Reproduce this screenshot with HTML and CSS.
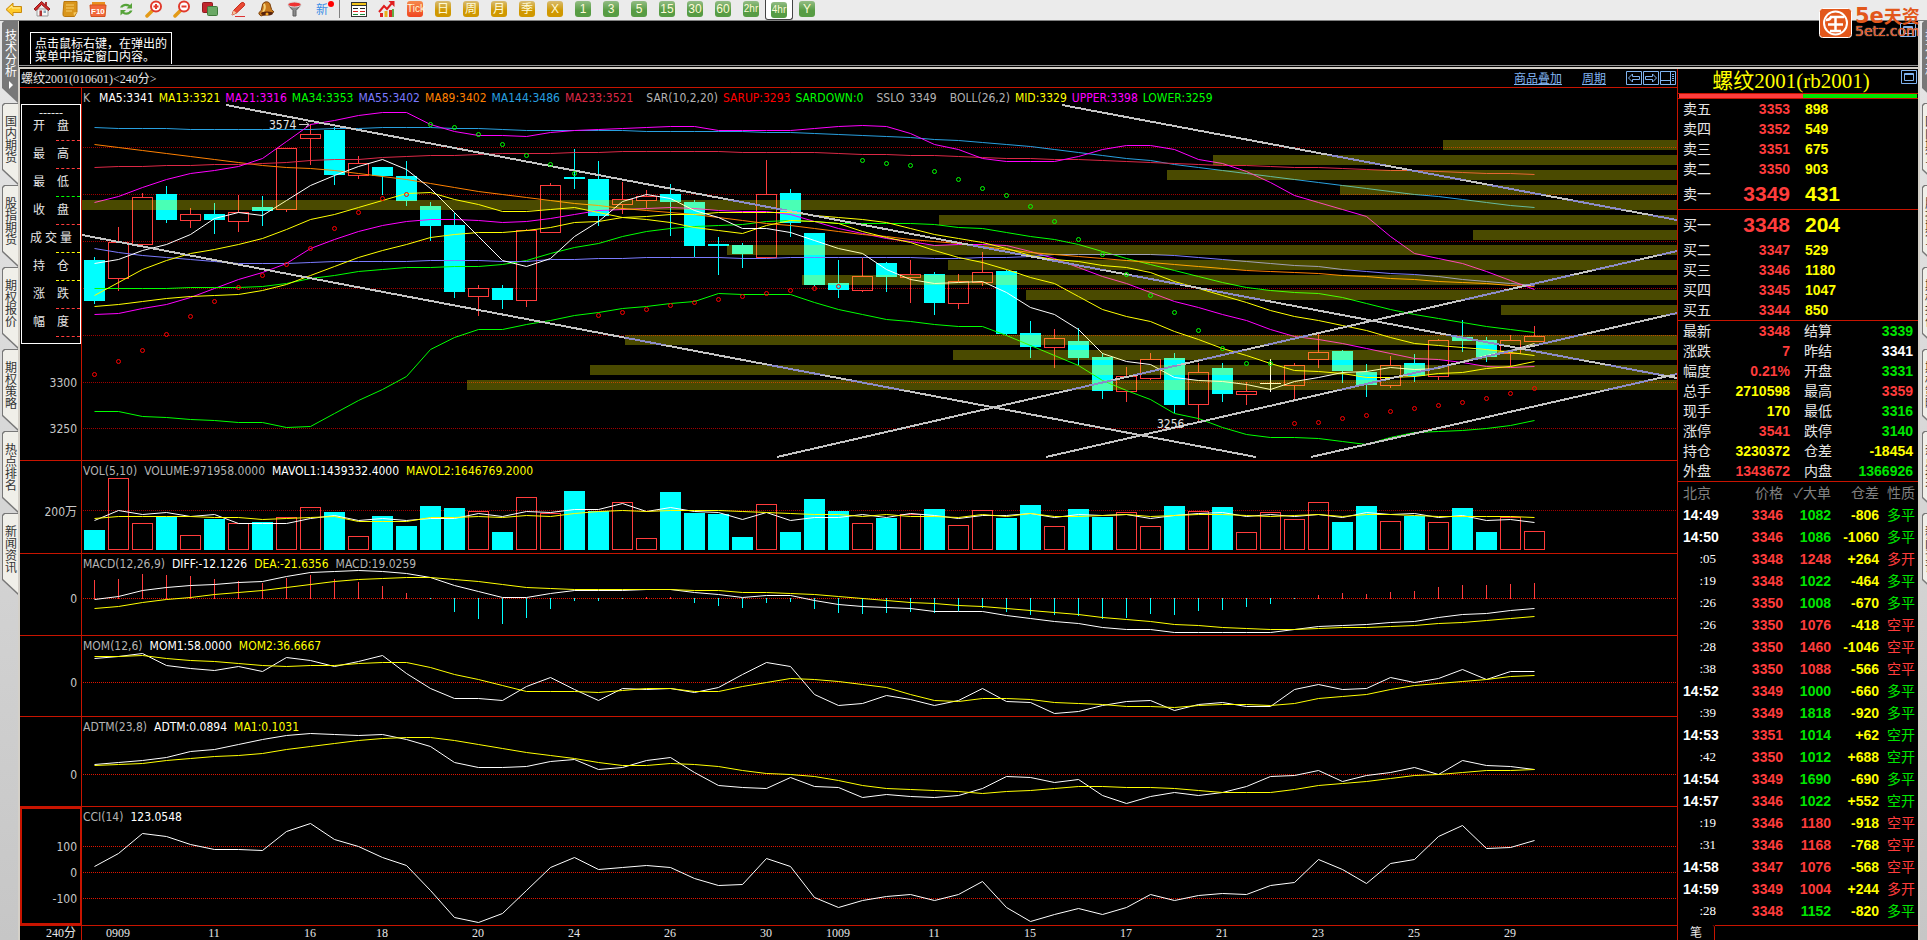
FILE: index.html
```html
<!DOCTYPE html>
<html lang="zh-CN">
<head>
    <meta charset="UTF-8" />
    <meta name="viewport" content="width=device-width, initial-scale=1" />
    <title>螺纹2001 240分</title>
    <link rel="stylesheet" href="styles.css">
</head>
<body>

    <!-- Toolbar -->
    <header class="toolbar">
        <button aria-label="返回"><svg width="18" height="18" viewBox="0 0 18 18"><path d="M1 9.500 L8 3 V6.500 H16.500 V12.500 H8 V16 Z" fill="#ffc928" stroke="#c98a10"/><path d="M3.500 9 L7 6 V8 H15" fill="none" stroke="#fff0a0"/></svg></button>
        <button aria-label="首页"><svg width="18" height="18" viewBox="0 0 18 18"><path d="M4 9 H15 V16 H4 Z" fill="#f4f4f4" stroke="#999"/><path d="M12 2 H14 V6 H12 Z" fill="#a33"/><path d="M1 9 L8.500 1.500 L17 9 L15.500 10.500 L8.500 4.500 L3 10.500 Z" fill="#d22a2a" stroke="#8d1818"/><path d="M6.500 10.500 H9 V16 H6.500 Z" fill="#b03030"/><path d="M10.500 10.500 H13 V13 H10.500 Z" fill="#8ab"/></svg></button>
        <button aria-label="公告"><svg width="18" height="18" viewBox="0 0 18 18"><path d="M3 1.500 H16 V12 L13.500 16.500 H3.500 Q1.500 16.500 2 13 Z" fill="#d9961c" stroke="#b9770c"/><path d="M5 5 H13 M5 8 H13 M5 11 H11" stroke="#f6cd6b"/><path d="M13 16 L12.500 12.500 L16 12" fill="#f5c965"/></svg></button>
        <button aria-label="F10"><svg width="18" height="18" viewBox="0 0 18 18"><path d="M3 2 H16 V14 H3 Z" fill="#e98f1f"/><path d="M1 5 H17 L16 16.500 H2 Z" fill="#f2683a" stroke="#d2501f"/><text x="2" y="14" class="f10">F10</text></svg></button>
        <button aria-label="刷新"><svg width="18" height="18" viewBox="0 0 18 18"><path d="M3 7.500 Q5 3 11 4 L13 5 L15 3 V8.500 H9.500 L11.500 6.500 Q7 5 5.500 7.500 Z" fill="#56a339"/><path d="M15.500 10.500 Q13.500 15.500 7.500 14.500 L5.500 13.500 L3.500 15.500 V10 H9 L7 12 Q11.500 13.500 13 10.500 Z" fill="#56a339"/></svg></button>
        <button aria-label="放大"><svg width="18" height="18" viewBox="0 0 18 18"><path d="M2 16 L8 10" stroke="#e39a17" stroke-width="3.500" stroke-linecap="round"/><circle cx="11" cy="6.500" r="5" fill="#fff" stroke="#e13a2c" stroke-width="2"/><path d="M8.500 6.500 H13.500 M11 4 V9" stroke="#e13a2c" stroke-width="2"/></svg></button>
        <button aria-label="缩小"><svg width="18" height="18" viewBox="0 0 18 18"><path d="M2 16 L8 10" stroke="#e39a17" stroke-width="3.500" stroke-linecap="round"/><circle cx="11" cy="6.500" r="5" fill="#fff" stroke="#e13a2c" stroke-width="2"/><path d="M8.500 6.500 H13.500" stroke="#e13a2c" stroke-width="2"/></svg></button>
        <button aria-label="叠加"><svg width="18" height="18" viewBox="0 0 18 18"><rect x="1.500" y="2.500" width="10" height="10" rx="1" fill="#c0262d" stroke="#8f1b20"/><rect x="6.500" y="6.500" width="10" height="9" rx="1" fill="#6aa865" stroke="#3f7a3b"/></svg></button>
        <button aria-label="画线"><svg width="18" height="18" viewBox="0 0 18 18"><path d="M3 15 L4.500 10.500 L12 3 Q14 1.500 15.500 3.500 Q16 5 15 6 L7.500 13 Z" fill="#ea4a35" stroke="#c42d1c"/><path d="M3 15 L4.500 10.500 L7.500 13 Z" fill="#f4c9a0"/><path d="M6 16.500 H16" stroke="#d33"/></svg></button>
        <button aria-label="预警"><svg width="18" height="18" viewBox="0 0 18 18"><path d="M8 2 Q13 1 13.500 6 Q14 10 17 12 L4 16 Q1 14 2 12.500 Q5 11 5 7 Q5 3 8 2 Z" fill="#c97a1c" stroke="#7c420e"/><path d="M7 4 Q9 8 6 12" fill="none" stroke="#f6cf74" stroke-width="2"/><ellipse cx="10" cy="13.500" rx="6" ry="2" fill="#57220d"/><circle cx="10" cy="14" r="1.500" fill="#f6a623"/></svg></button>
        <button aria-label="筛选"><svg width="18" height="18" viewBox="0 0 18 18"><path d="M3 5 L8 10.500 V16 H11 V10.500 L16 5 Z" fill="#8a8a8a" stroke="#5d5d5d"/><ellipse cx="9.500" cy="4.500" rx="6.500" ry="2.500" fill="#e33" stroke="#ddd"/></svg></button>
        <button aria-label="新功能" class="new-btn">新<i></i></button>
        <span class="sep"></span>
        <button aria-label="报价表"><svg width="18" height="18" viewBox="0 0 18 18"><rect x="1.500" y="2.500" width="15" height="14" fill="#fff" stroke="#333"/><path d="M2 4 H16" stroke="#f2c21a" stroke-width="2"/><path d="M1 5.500 H17" stroke="#333"/><path d="M3 8.500 H8 M10 8.500 H15" stroke="#222"/><path d="M3 11.500 H8 M10 11.500 H15" stroke="#d22"/><path d="M3 14.500 H8 M10 14.500 H15" stroke="#1a8a3a"/></svg></button>
        <button aria-label="走势图"><svg width="18" height="18" viewBox="0 0 18 18"><rect x="2" y="13" width="3" height="4" fill="#d22"/><rect x="6.500" y="11" width="3" height="6" fill="#e8b01c"/><rect x="11" y="10" width="3" height="7" fill="#d22"/><rect x="14" y="9" width="2" height="8" fill="#6a4"/><path d="M1 12 L6 6 L9 9 L14 3" fill="none" stroke="#e01e1e" stroke-width="2"/><path d="M10.500 1 H16.500 V7 Z" fill="#e01e1e"/></svg></button>
        <button><b class="badge tick">Tick</b></button>
        <button><b class="badge gold">日</b></button>
        <button><b class="badge gold">周</b></button>
        <button><b class="badge gold">月</b></button>
        <button><b class="badge gold">季</b></button>
        <button><b class="badge gold">X</b></button>
        <button><b class="badge green">1</b></button>
        <button><b class="badge green">3</b></button>
        <button><b class="badge green">5</b></button>
        <button><b class="badge green">15</b></button>
        <button><b class="badge green">30</b></button>
        <button><b class="badge green">60</b></button>
        <button><b class="badge green small">2hr</b></button>
        <button class="selected"><b class="badge green small">4hr</b></button>
        <button><b class="badge green">Y</b></button>
    </header>

    <div class="workspace">
        <nav class="rail">
            <button class="tab active"><span>技术分析<br><i></i></span></button>
            <button class="tab"><span>国内期货</span></button>
            <button class="tab"><span>股指期货</span></button>
            <button class="tab"><span>期权报价</span></button>
            <button class="tab"><span>期权策略</span></button>
            <button class="tab"><span>热点排名</span></button>
            <button class="tab"><span>新闻资讯</span></button>
        </nav>

        <div class="desk">
            <section class="blank-pane">
                <p class="hint">点击鼠标右键，在弹出的菜单中指定窗口内容。</p>
                <button class="win-btn" aria-label="最大化"><svg width="16" height="14"><path d="M0.500 0.500 H15.500 V13.500 H0.500 Z M3.500 3.500 H12.500 V10.500 H3.500 Z M3 4.500 H13" /></svg></button>
                <div class="logo">
                    <svg width="33" height="30" viewBox="0 0 33 30"><rect x="0.500" y="0.500" width="32" height="29" rx="3" fill="#e2571b" stroke="#fff"/><circle cx="16.500" cy="15" r="11.500" fill="none" stroke="#fff" stroke-width="2"/><path d="M7 12 Q11 12 12 9 H25 M9 16.500 H24 M16.500 10 V23 M11 23 H22" fill="none" stroke="#fff" stroke-width="2.500"/></svg>
                    <div class="logo-text"><span class="logo-top"><span class="five">5e</span>天资</span><span class="logo-url">5etz.com</span></div>
                </div>
            </section>

            <div class="windows">
                <main class="chart">
                    <div class="chart-title">
                        <h1>螺纹2001(010601)&lt;240分&gt;</h1>
                        <a href="#overlay">商品叠加</a>
                        <a href="#period">周期</a>
                        <div class="chart-tools">
                            <button class="win-btn" aria-label="左移"><svg width="16" height="14"><path d="M0.500 0.500 H15.500 V13.500 H0.500 Z M2.500 7 L6.500 3 V5.500 H13.500 V8.500 H6.500 V11 Z"/></svg></button>
                            <button class="win-btn" aria-label="右移"><svg width="16" height="14"><path d="M0.500 0.500 H15.500 V13.500 H0.500 Z M13.500 7 L9.500 3 V5.500 H2.500 V8.500 H9.500 V11 Z"/></svg></button>
                            <button class="win-btn" aria-label="侧栏"><svg width="16" height="14"><path d="M0.500 0.500 H15.500 V13.500 H0.500 Z M10.500 0 V14 M0 9.500 H10 M12 3.500 H14 M12 5.500 H14 M12 7.500 H14 M12 9.500 H14"/></svg></button>
                        </div>
                    </div>

                    <section class="panel">
                        <div class="axis">
                            <svg class="axis-labels" id="priceAxis"></svg>
                            <ul class="readout">
                                <li class="first">------</li>
                                <li class="red">开　盘</li>
                                <li class="red">最　高</li>
                                <li class="green">最　低</li>
                                <li class="red">收　盘</li>
                                <li class="yellow">成 交 量</li>
                                <li class="yellow">持　仓</li>
                                <li class="red">涨　跌</li>
                                <li class="red">幅　度</li>
                            </ul>
                        </div>
                        <div class="plot">
                            <div class="legend main-legend">
                                <span class="name k">K</span><span class="white">MA5:3341</span><span class="yellow">MA13:3321</span><span class="magenta">MA21:3316</span><span class="green">MA34:3353</span><span class="violet">MA55:3402</span><span class="orange">MA89:3402</span><span class="blue">MA144:3486</span><span class="crimson">MA233:3521</span>
                                <span class="name group">SAR(10,2,20)</span><span class="pure-red">SARUP:3293</span><span class="green">SARDOWN:0</span>
                                <span class="name group">SSLO</span><span class="name">3349</span>
                                <span class="name group">BOLL(26,2)</span><span class="yellow">MID:3329</span><span class="magenta">UPPER:3398</span><span class="green">LOWER:3259</span>
                            </div>
                            <svg id="price" height="356"></svg>
                        </div>
                    </section>

                    <section class="panel">
                        <div class="axis"><svg class="axis-labels" id="volAxis"></svg></div>
                        <div class="plot">
                            <div class="legend"><span class="name">VOL(5,10)</span><span class="name">VOLUME:971958.0000</span><span class="white">MAVOL1:1439332.4000</span><span class="yellow">MAVOL2:1646769.2000</span></div>
                            <svg id="vol" height="76"></svg>
                        </div>
                    </section>

                    <section class="panel">
                        <div class="axis"><svg class="axis-labels" id="macdAxis"></svg></div>
                        <div class="plot">
                            <div class="legend"><span class="name">MACD(12,26,9)</span><span class="white">DIFF:-12.1226</span><span class="yellow">DEA:-21.6356</span><span class="name">MACD:19.0259</span></div>
                            <svg id="macd" height="65"></svg>
                        </div>
                    </section>

                    <section class="panel">
                        <div class="axis"><svg class="axis-labels" id="momAxis"></svg></div>
                        <div class="plot">
                            <div class="legend"><span class="name">MOM(12,6)</span><span class="white">MOM1:58.0000</span><span class="yellow">MOM2:36.6667</span></div>
                            <svg id="mom" height="64"></svg>
                        </div>
                    </section>

                    <section class="panel">
                        <div class="axis"><svg class="axis-labels" id="adtmAxis"></svg></div>
                        <div class="plot">
                            <div class="legend"><span class="name">ADTM(23,8)</span><span class="white">ADTM:0.0894</span><span class="yellow">MA1:0.1031</span></div>
                            <svg id="adtm" height="73"></svg>
                        </div>
                    </section>

                    <section class="panel current">
                        <div class="axis"><svg class="axis-labels" id="cciAxis"></svg></div>
                        <div class="plot">
                            <div class="legend"><span class="name">CCI(14)</span><span class="white">123.0548</span></div>
                            <svg id="cci" height="102"></svg>
                        </div>
                    </section>

                    <section class="panel dates">
                        <div class="axis">240分</div>
                        <div class="plot"><svg id="dates" height="14"></svg></div>
                    </section>
                </main>

                <aside class="quote">
                    <div class="quote-title">
                        <h2>螺纹2001(rb2001)</h2>
                        <button class="win-btn" aria-label="最大化"><svg width="16" height="14"><path d="M0.500 0.500 H15.500 V13.500 H0.500 Z M3.500 3.500 H12.500 V10.500 H3.500 Z M3 4.500 H13"/></svg></button>
                    </div>
                    <div class="ratio"><span class="buy"></span><span class="sell"></span></div>

                    <table class="book">
                        <tbody>
                            <tr><th>卖五</th><td>3353</td><td>898</td></tr>
                            <tr><th>卖四</th><td>3352</td><td>549</td></tr>
                            <tr><th>卖三</th><td>3351</td><td>675</td></tr>
                            <tr><th>卖二</th><td>3350</td><td>903</td></tr>
                            <tr class="best"><th>卖一</th><td>3349</td><td>431</td></tr>
                        </tbody>
                    </table>
                    <table class="book">
                        <tbody>
                            <tr class="best"><th>买一</th><td>3348</td><td>204</td></tr>
                            <tr><th>买二</th><td>3347</td><td>529</td></tr>
                            <tr><th>买三</th><td>3346</td><td>1180</td></tr>
                            <tr><th>买四</th><td>3345</td><td>1047</td></tr>
                            <tr><th>买五</th><td>3344</td><td>850</td></tr>
                        </tbody>
                    </table>
                    <table class="stats">
                        <tbody>
                            <tr><th>最新</th><td class="red">3348</td><th>结算</th><td class="green">3339</td></tr>
                            <tr><th>涨跌</th><td class="red">7</td><th>昨结</th><td class="white">3341</td></tr>
                            <tr><th>幅度</th><td class="red">0.21%</td><th>开盘</th><td class="green">3331</td></tr>
                            <tr><th>总手</th><td class="yellow">2710598</td><th>最高</th><td class="red">3359</td></tr>
                            <tr><th>现手</th><td class="yellow">170</td><th>最低</th><td class="green">3316</td></tr>
                            <tr><th>涨停</th><td class="red">3541</td><th>跌停</th><td class="green">3140</td></tr>
                            <tr><th>持仓</th><td class="yellow">3230372</td><th>仓差</th><td class="yellow">-18454</td></tr>
                            <tr><th>外盘</th><td class="red">1343672</td><th>内盘</th><td class="green">1366926</td></tr>
                        </tbody>
                    </table>
                    <table class="ticks">
                        <thead><tr><th>北京</th><th>价格</th><th>✓大单</th><th>仓差</th><th>性质</th></tr></thead>
                        <tbody id="ticks"></tbody>
                    </table>
                    <div class="quote-tabs"><button>笔</button><span></span></div>
                </aside>
            </div>
        </div>

        <nav class="rail rail-right">
            <button class="tab active"><span>技术分析</span></button>
            <button class="tab"><span>国内期货</span></button>
            <button class="tab"><span>股指期货</span></button>
            <button class="tab"><span>期权报价</span></button>
            <button class="tab"><span>期权策略</span></button>
            <button class="tab"><span>热点排名</span></button>
            <button class="tab"><span>新闻资讯</span></button>
        </nav>
    </div>

    <script src="script.js"></script>
</body>
</html>
```
FILE: styles.css
```css
* {
    box-sizing: border-box;
}

body {
    margin: 0;
    height: 100vh;
    display: flex;
    flex-direction: column;
    overflow: hidden;
    background: #000;
    color: #e6e6e6;
    font-family: "Liberation Serif", "Noto Sans CJK SC", serif;
    font-size: 12px;
}

button {
    margin: 0;
    padding: 0;
    border: none;
    background: none;
    color: inherit;
    font: inherit;
    cursor: pointer;
}

h1, h2, p, ul {
    margin: 0;
    padding: 0;
    font-weight: normal;
}

svg {
    display: block;
}

.white { color: #fff; }
.yellow { color: #ffff00; }
.magenta { color: #ff00ff; }
.green { color: #00ff00; }
.violet { color: #7b7bff; }
.orange { color: #ff8000; }
.blue { color: #28a0e0; }
.crimson { color: #dc2846; }
.red { color: #ff3c3c; }
.pure-red { color: #ff0000; }

/* toolbar */
.toolbar {
    display: flex;
    height: 21px;
    flex-shrink: 0;
    background: #ebebeb;
    border-bottom: 1px solid #808080;
}

.toolbar button {
    position: relative;
    width: 28px;
    height: 20px;
    padding-bottom: 2px;
    display: flex;
    align-items: center;
    justify-content: center;
}

.toolbar .sep {
    width: 1px;
    height: 18px;
    margin: 0 5px 0 3px;
    background: #808080;
}

.toolbar .selected {
    padding: 0;
    background: #fff;
    border: 1px solid #444;
    border-top: none;
    border-radius: 0 0 3px 3px;
}

.f10 {
    font: bold 8px "Liberation Sans Narrow", "Liberation Sans", sans-serif;
    fill: #fff;
}

.new-btn {
    color: #3a8ee6;
}

.new-btn i {
    position: absolute;
    top: 1px;
    right: 2px;
    width: 6px;
    height: 6px;
    border-radius: 50%;
    background: #f00;
}

.badge {
    width: 16px;
    height: 16px;
    border-radius: 3px;
    color: #fffbd8;
    font: 12px/16px "Liberation Sans", "Noto Sans CJK SC", sans-serif;
    text-align: center;
}

.badge.tick { background: linear-gradient(#f58a4c, #f0451f); }
.badge.gold { background: linear-gradient(#d8bc72, #d09800 60%); }
.badge.green { background: linear-gradient(#93bd84, #579c44 60%); }

.badge.tick, .badge.small {
    font: 10px/16px "Liberation Sans Narrow", "Liberation Sans", sans-serif;
}

/* side rails */
.workspace {
    display: flex;
    flex: 1;
    min-height: 0;
}

.rail {
    width: 18px;
    flex-shrink: 0;
    overflow: hidden;
    padding-left: 2px;
    background: linear-gradient(#e6e6e6, #c6c6c6);
}

.rail-right {
    width: 7px;
}

.tab {
    display: block;
    position: relative;
    width: 16px;
    height: 82px;
    padding: 13px 0 0 3px;
    background: #777;
    color: #333;
    text-align: left;
    vertical-align: top;
    clip-path: polygon(0 2px, 2px 0, 100% 0, 100% 100%, 0 67px);
}

.tab::before {
    content: "";
    position: absolute;
    inset: 1px 0 0 1px;
    background: #f0efe9;
    clip-path: polygon(0 2px, 2px 0, 100% 0, 100% 79px, 0 65px);
}

.tab.active {
    color: #fff;
    padding-top: 9px;
}

.tab.active::before {
    background: #787878;
}

.tab span {
    position: relative;
    display: block;
    width: 12px;
    height: 69px;
    line-height: 12px;
}

.tab.active span {
    height: 73px;
}

.tab i {
    display: block;
    width: 5px;
    margin: 3px 0 0 4px;
    border: 4px solid transparent;
    border-left-color: #fff;
    border-right: none;
}

/* window area */
.desk {
    flex: 1;
    min-width: 0;
    display: flex;
    flex-direction: column;
    border-left: 1px solid #d4d0c8;
    border-right: 2px solid #d4d0c8;
}

.blank-pane {
    position: relative;
    height: 45px;
    border-bottom: 1px solid #909090;
    padding: 11px 0 0 11px;
    flex-shrink: 0;
}

.hint {
    width: 142px;
    height: 32px;
    padding: 5px 4px 0;
    border: 1px solid #fff;
    border-bottom: none;
    color: #fff;
    line-height: 13px;
}

.win-btn svg {
    fill: none;
    stroke: #80b4f0;
}

.blank-pane .win-btn {
    position: absolute;
    top: 2px;
    right: 2px;
}

.logo {
    position: absolute;
    top: -13px;
    right: -3px;
    display: flex;
    gap: 3px;
    color: #e2571b;
    font-family: "DejaVu Sans", "Noto Sans CJK SC", sans-serif;
}

.logo-text {
    width: 66px;
    display: flex;
    flex-direction: column;
    white-space: nowrap;
}

.logo-top {
    height: 17px;
    font-size: 18px;
    font-weight: bold;
    line-height: 16px;
}

.five {
    font-size: 21px;
}

.logo-url {
    font-size: 14px;
    line-height: 13px;
    text-shadow: 0 0 1px #fff;
}

.windows {
    flex: 1;
    min-height: 0;
    display: flex;
    margin-top: 1px;
    border-top: 2px solid #d4d0c8;
    border-left: 1px solid #d4d0c8;
}

/* chart window */
.chart {
    flex: 1;
    min-width: 0;
}

.chart-title {
    display: flex;
    align-items: center;
    gap: 20px;
    height: 18px;
    padding: 0 1px;
}

.chart-title h1 {
    flex: 1;
    font-size: 12px;
}

.chart-title a {
    color: #80b4f0;
}

.chart-tools {
    display: flex;
    gap: 1px;
}

.panel {
    display: flex;
    border-top: 1px solid #c81400;
}

.axis {
    position: relative;
    width: 62px;
    flex-shrink: 0;
    border-right: 1px solid #c81400;
}

.axis-labels {
    position: absolute;
    left: 0;
    top: 16px;
    width: 61px;
    height: 100%;
    overflow: visible;
    font: 12px "DejaVu Sans Condensed", "Noto Sans", "Noto Sans CJK SC", sans-serif;
    fill: #c8c8c8;
}

.current .axis {
    outline: 2px solid #c81400;
    outline-offset: -2px;
}

.plot {
    flex: 1;
    min-width: 0;
}

.plot svg {
    width: 100%;
    overflow: hidden;
    font: 12px "DejaVu Sans Condensed", "Noto Sans", sans-serif;
    fill: #e6e6e6;
}

.legend {
    display: flex;
    gap: 7px;
    height: 16px;
    padding-left: 1px;
    font: 12px/20px "DejaVu Sans Condensed", "Noto Sans", sans-serif;
    white-space: nowrap;
}

.main-legend { gap: 5px; }
.legend .name { color: #b4b4b4; }
.legend .k { margin-right: 4px; }
.legend .group { margin-left: 8px; }

.readout {
    position: relative;
    width: 60px;
    height: 240px;
    margin: 16px 0 0 1px;
    border: 1px solid #fff;
    list-style: none;
    text-align: center;
}

.readout li {
    height: 28px;
    line-height: 27px;
}

.readout li::after {
    content: "";
    display: block;
    width: 24px;
    margin-left: auto;
    border-top: 1px dashed currentColor;
}

.readout li::first-line {
    color: #e6e6e6;
}

.readout .first {
    height: 8px;
    line-height: 16px;
}

.readout .first::after {
    display: none;
}

.dates {
    line-height: 14px;
}

.dates .axis {
    padding-right: 5px;
    text-align: right;
}

.plot #dates {
    font: 12px "Liberation Serif", serif;
}

/* quote window */
.quote {
    width: 241px;
    flex-shrink: 0;
    display: flex;
    flex-direction: column;
    border-left: 1px solid #c81400;
}

.quote-title {
    position: relative;
    height: 25px;
    flex-shrink: 0;
    border-bottom: 1px solid #c81400;
    text-align: center;
}

.quote-title h2 {
    padding-right: 14px;
    color: #ffff00;
    font-size: 21px;
    line-height: 24px;
}

.quote-title .win-btn {
    position: absolute;
    top: 1px;
    right: 1px;
}

.ratio {
    display: flex;
    height: 5px;
    flex-shrink: 0;
    padding: 0 1px;
    border-bottom: 1px solid #c81400;
}

.ratio .buy { flex: 52; background: #ff3c3c; }
.ratio .sell { flex: 48; background: #00e600; }

.quote table {
    width: 100%;
    table-layout: fixed;
    border-collapse: separate;
    border-spacing: 0;
    font: bold 14px "Liberation Sans", "Noto Sans CJK SC", sans-serif;
}

.quote th, .quote td {
    padding: 0;
    height: 20px;
    line-height: 20px;
    text-align: right;
}

.quote th {
    font-weight: normal;
}

.quote tbody th {
    padding-left: 5px;
    text-align: left;
}

.book, .stats {
    border-bottom: 1px solid #c81400;
}

.book th, .stats th { width: 45px; }

.book td:nth-child(2) {
    width: 67px;
    color: #ff3c3c;
}

.book td:last-child {
    padding-left: 15px;
    color: #ffff00;
    text-align: left;
}

.quote .best td {
    height: 30px;
    font-size: 21px;
}

.stats td:nth-child(2) { width: 67px; }
.stats th:nth-child(3) { width: 58px; padding-left: 14px; }
.stats td:last-child { padding-right: 5px; }

.quote .ticks th, .quote .ticks td {
    height: 22px;
    line-height: 22px;
}

.ticks th:nth-child(1) { width: 47px; padding-left: 5px; text-align: left; }
.ticks th:nth-child(2) { width: 58px; }
.ticks th:nth-child(3) { width: 48px; }
.ticks th:nth-child(4) { width: 48px; }
.ticks thead th { color: #808080; white-space: nowrap; }
.ticks th:last-child, .ticks td:last-child { padding-right: 3px; }

.ticks td:first-child {
    padding-left: 5px;
    text-align: left;
    color: #fff;
}

.quote .ticks .second {
    padding-right: 9px;
    text-align: right;
    font: 13px/22px "Liberation Serif", serif;
}

.ticks td:last-child { font-weight: normal; }
.ticks .green, .stats .green { color: #00e600; }

.quote-tabs {
    display: flex;
    flex: 1;
    margin-top: 3px;
}

.quote-tabs button {
    width: 37px;
    line-height: 14px;
    border-right: 1px solid #c81400;
    border-radius: 0 3px 0 0;
}

.quote-tabs span {
    flex: 1;
    border-top: 1px solid #c81400;
}
```
FILE: script.js
```js
const NS = 'http://www.w3.org/2000/svg';
const STEP = 24;   // px between bars
const FIRST = 12;  // centre of the first bar

const CYAN = '#00ffff';
const RED = '#ff3c3c';

function el(parent, name, attrs, text) {
  const node = document.createElementNS(NS, name);
  for (const key in attrs) node.setAttribute(key, attrs[key]);
  if (text !== undefined) node.textContent = text;
  parent.appendChild(node);
  return node;
}

const barX = i => FIRST + STEP * i;

// levels are stored in thirds of a pixel, offset is the top of the panel
function makePanel(id, offset) {
  const svg = document.getElementById(id);
  const y = v => v / 3 - offset;
  return {
    svg,
    y,
    line(values, color) {
      const points = values.map((v, i) => (barX(i) + 0.5) + ',' + (Math.floor(y(v)) + 0.5)).join(' ');
      el(svg, 'polyline', { points, fill: 'none', stroke: color });
    },
    grid(levels, color) {
      levels.forEach(v => {
        const gy = Math.floor(y(v)) + 0.5;
        el(svg, 'line', { x1: 1, x2: '100%', y1: gy, y2: gy, stroke: color, 'stroke-dasharray': '1 1', 'shape-rendering': 'crispEdges' });
      });
    },
    labels(items) {
      const axis = document.getElementById(id + 'Axis');
      items.forEach(([v, text]) => el(axis, 'text', { x: 57, y: Math.round(y(v)) + 5, 'text-anchor': 'end' }, text));
    },
    box(i, top, bottom, up) {
      const t = Math.round(y(top));
      const b = Math.round(y(bottom));
      if (up) {
        el(svg, 'rect', { x: barX(i) - 9.5, y: t + 0.5, width: 20, height: Math.max(b - t, 2), fill: 'none', stroke: RED, 'shape-rendering': 'crispEdges' });
      } else {
        el(svg, 'rect', { x: barX(i) - 10, y: t, width: 21, height: Math.max(b - t, 2), fill: CYAN });
      }
    },
    stick(i, from, to, color) {
      const a = Math.round(y(from));
      const b = Math.round(y(to));
      if (b > a) el(svg, 'rect', { x: barX(i), y: a, width: 1, height: b - a, fill: color });
    }
  };
}

/* ---------- price ---------- */
// [kind, body top, body bottom, high, low]
const candles = [
  ['d', 540, 663, 531, 672], ['u', 487, 593, 441, 632], ['u', 352, 491, 339, 496], ['d', 342, 420, 318, 429],
  ['u', 403, 419, 384, 444], ['d', 402, 420, 369, 462], ['u', 397, 422, 345, 456], ['d', 381, 393, 348, 438],
  ['u', 205, 388, 205, 396], ['u', 163, 173, 133, 255], ['d', 150, 285, 141, 315], ['u', 250, 284, 228, 297],
  ['d', 261, 288, 261, 345], ['d', 288, 363, 243, 378], ['d', 378, 438, 366, 483], ['d', 435, 636, 399, 654],
  ['u', 625, 647, 615, 708], ['d', 624, 660, 615, 687], ['u', 451, 659, 447, 681], ['u', 316, 455, 309, 455],
  ['d', 291, 297, 207, 327], ['d', 297, 408, 243, 438], ['u', 358, 371, 306, 402], ['u', 348, 359, 330, 384],
  ['d', 342, 366, 312, 468], ['d', 366, 498, 360, 531], ['d', 492, 498, 471, 585], ['d', 495, 522, 489, 564],
  ['u', 343, 530, 240, 530], ['d', 339, 430, 327, 471], ['d', 459, 615, 459, 618], ['d', 609, 630, 540, 654],
  ['u', 589, 629, 534, 636], ['d', 549, 591, 546, 636], ['u', 583, 590, 540, 669], ['d', 582, 669, 576, 705],
  ['u', 604, 668, 582, 687], ['u', 577, 605, 516, 618], ['d', 573, 762, 570, 765], ['d', 759, 801, 723, 834],
  ['u', 775, 800, 747, 864], ['d', 783, 834, 744, 855], ['d', 831, 933, 820, 957], ['u', 889, 932, 861, 966],
  ['u', 838, 893, 819, 900], ['d', 834, 975, 819, 1000], ['u', 877, 971, 849, 1026], ['d', 864, 942, 849, 966],
  ['u', 934, 941, 906, 975], ['w', 910, 913, 837, 936], ['u', 856, 914, 849, 960], ['u', 817, 836, 761, 864],
  ['d', 813, 873, 810, 909], ['d', 876, 915, 852, 951], ['u', 856, 914, 828, 924], ['d', 849, 888, 822, 906],
  ['u', 781, 887, 777, 900], ['d', 771, 783, 720, 816], ['d', 780, 832, 771, 846], ['u', 781, 818, 766, 858],
  ['u', 769, 782, 738, 782]
];

const ma = [
  ['#ff00ff', [703, 700, 686, 673, 652, 625, 598, 577, 550, 505, 478, 454, 436, 425, 419, 419, 421, 427, 425, 415, 403, 391, 387, 385, 383, 386, 391, 395, 395, 403, 425, 444, 460, 475, 484, 496, 493, 492, 497, 514, 535, 561, 588, 611, 636, 665, 683, 704, 722, 748, 769, 778, 790, 805, 820, 835, 838, 846, 858, 861, 859]],
  ['#00ff00', [625, 625, 625, 625, 622, 622, 622, 619, 609, 595, 586, 574, 568, 562, 562, 560, 558, 553, 540, 520, 502, 490, 469, 454, 445, 440, 436, 434, 425, 421, 425, 429, 430, 430, 430, 433, 442, 445, 457, 469, 478, 493, 513, 535, 552, 571, 589, 607, 622, 631, 636, 640, 652, 670, 688, 703, 714, 727, 739, 748, 756]],
  ['#7b7bff', [505, 517, 526, 532, 538, 544, 550, 550, 550, 547, 544, 544, 544, 544, 542, 541, 541, 544, 544, 538, 538, 535, 535, 532, 532, 532, 532, 535, 535, 532, 532, 532, 532, 532, 532, 535, 535, 533, 532, 528, 524, 524, 523, 523, 523, 526, 532, 538, 545, 550, 556, 560, 568, 574, 580, 583, 590, 598, 604, 611, 617]],
  ['#ff8000', [193, 203, 212, 220, 229, 238, 247, 256, 262, 266, 272, 280, 290, 298, 310, 322, 334, 343, 352, 361, 370, 376, 385, 391, 397, 403, 412, 420, 430, 436, 446, 455, 462, 469, 477, 485, 491, 499, 507, 516, 524, 528, 535, 541, 547, 553, 560, 566, 571, 574, 577, 580, 586, 590, 595, 598, 604, 607, 611, 616, 619]],
  ['#28a0e0', [142, 145, 145, 146, 148, 148, 148, 148, 148, 148, 146, 145, 142, 142, 142, 145, 145, 148, 151, 151, 151, 151, 151, 154, 154, 154, 154, 154, 156, 157, 160, 163, 166, 169, 173, 178, 181, 187, 193, 199, 208, 216, 226, 235, 241, 252, 262, 271, 279, 288, 298, 307, 316, 325, 334, 343, 349, 358, 366, 375, 382]],
  ['#dc2846', [262, 260, 258, 257, 256, 254, 252, 250, 247, 242, 239, 237, 233, 230, 227, 226, 223, 221, 220, 219, 217, 217, 214, 214, 214, 214, 214, 217, 217, 217, 217, 220, 223, 224, 226, 227, 229, 232, 234, 235, 237, 239, 241, 244, 247, 250, 253, 255, 257, 259, 262, 263, 266, 268, 271, 272, 275, 277, 280, 281, 283]],
  ['#ff00ff', [367, 349, 322, 298, 280, 271, 259, 235, 184, 133, 121, 106, 97, 97, 133, 154, 166, 167, 169, 157, 152, 148, 145, 142, 139, 139, 151, 151, 151, 151, 145, 139, 136, 139, 160, 193, 208, 236, 244, 244, 244, 230, 208, 197, 196, 208, 238, 250, 275, 307, 346, 367, 388, 409, 469, 520, 536, 551, 575, 602, 628]],
  ['#00ff00', [994, 994, 1009, 1012, 1018, 1021, 1027, 1027, 1042, 1039, 1000, 961, 928, 889, 808, 772, 748, 748, 734, 722, 706, 697, 685, 679, 670, 664, 640, 643, 643, 643, 668, 688, 703, 718, 724, 733, 739, 739, 766, 796, 826, 856, 902, 931, 958, 1000, 1015, 1042, 1064, 1072, 1072, 1076, 1085, 1092, 1072, 1057, 1054, 1051, 1045, 1036, 1021]],
  ['#ffff00', [679, 673, 664, 655, 649, 646, 643, 631, 612, 586, 559, 532, 511, 493, 472, 463, 457, 457, 451, 441, 427, 424, 413, 410, 403, 402, 397, 397, 397, 397, 406, 412, 418, 428, 444, 464, 475, 488, 505, 526, 538, 545, 556, 562, 578, 605, 625, 646, 668, 691, 709, 721, 736, 751, 772, 790, 796, 802, 809, 817, 826]],
  ['#ffff00', [646, 607, 568, 541, 520, 508, 493, 475, 448, 418, 403, 381, 361, 340, 337, 358, 373, 394, 394, 387, 382, 397, 413, 418, 428, 442, 452, 460, 436, 422, 424, 430, 455, 472, 487, 511, 532, 547, 568, 592, 610, 649, 688, 709, 724, 754, 778, 805, 826, 850, 871, 875, 880, 892, 892, 888, 881, 877, 865, 859, 844]],
  ['#ffffff', [550, 538, 511, 493, 462, 415, 398, 406, 360, 316, 286, 258, 238, 268, 325, 398, 470, 541, 559, 535, 470, 425, 364, 343, 355, 392, 412, 445, 445, 458, 480, 506, 520, 568, 598, 610, 607, 604, 638, 682, 703, 748, 820, 844, 852, 892, 901, 905, 912, 928, 904, 892, 878, 874, 862, 868, 864, 845, 826, 810, 790]]
];

const sar = [
  [0, '#ff0000', [883, 844, 811, 763, 709, 664, 622, 586, 553, 505, 445, 397, 355, 343]],
  [14, '#00ff00', [133, 142, 163, 193, 226, 253, 280]],
  [21, '#ff0000', [706, 697, 688, 676, 667, 658, 649, 640, 631, 625, 619]],
  [32, '#00ff00', [241, 250, 256, 274, 298, 325, 346, 379, 424, 478, 523, 583, 646, 697, 751, 805, 850, 850]],
  [50, '#ff0000', [1030, 1027, 1015, 1006, 994, 985, 976, 967, 955, 940, 925]]
];

// volume by price: [level, left edge]
const profile = [
  [180, 1361], [225, 1131], [270, 1085], [315, 1258], [360, 0], [405, 857], [450, 1391], [495, 645],
  [540, 866], [585, 720], [630, 944], [675, 1419], [765, 543], [810, 871], [855, 508], [900, 385]
];

// trend lines: x1, y1, x2, y2
const trends = [
  [144, 1, 1595, 274], [0, 131, 1174, 353], [980, 1, 1595, 116],
  [695, 353, 1595, 147], [964, 353, 1595, 209], [1229, 353, 1595, 270]
];

const price = makePanel('price', 24);
price.grid([202, 343, 484, 625, 766, 907, 1045], '#a00000');
price.labels([[907, '3300'], [1045, '3250']]);

candles.forEach(([kind, top, bottom, high, low], i) => {
  const up = kind === 'u';
  if (kind === 'w') {
    price.stick(i, high, low, '#fff');
    el(price.svg, 'rect', { x: barX(i) - 10, y: Math.round(price.y(top)), width: 21, height: 1, fill: '#fff' });
    return;
  }
  price.stick(i, high, top, up ? RED : CYAN);
  price.stick(i, bottom, low, up ? RED : CYAN);
  price.box(i, top, bottom, up);
});

ma.forEach(([color, values]) => price.line(values, color));

const clip = el(price.svg, 'clipPath', { id: 'bands' });
profile.forEach(([level, x]) => {
  const rect = { x, y: Math.round(price.y(level)), width: '100%', height: 10 };
  el(clip, 'rect', rect);
  el(price.svg, 'rect', Object.assign({ fill: '#ffff00', 'fill-opacity': 0.29 }, rect));
});

trends.forEach(([x1, y1, x2, y2]) => {
  const trend = { x1, y1, x2, y2, 'stroke-width': 2, 'shape-rendering': 'crispEdges' };
  el(price.svg, 'line', Object.assign({ stroke: '#c4c4c4' }, trend));
  el(price.svg, 'line', Object.assign({ stroke: '#8c8cc8', 'clip-path': 'url(#bands)' }, trend));
});

sar.forEach(([start, color, values]) => values.forEach((v, k) => {
  el(price.svg, 'circle', { cx: barX(start + k) + 0.5, cy: Math.floor(price.y(v)) + 0.5, r: 2, fill: 'none', stroke: color });
}));

el(price.svg, 'text', { x: 187, y: 25 }, '3574');
el(price.svg, 'path', { d: 'M217 20.5 H227 M224 18 L227 20.5 L224 23', fill: 'none', stroke: '#c8c8c8' });
el(price.svg, 'text', { x: 1075, y: 324 }, '3256');
el(price.svg, 'path', { d: 'M1105 319.5 H1114', fill: 'none', stroke: '#c8c8c8', 'stroke-dasharray': '2 2' });

/* ---------- volume ---------- */
const volume = [
  240, -85, -220, 201, -256, 207, -220, 216, -202, -172, 186, -259, 198, 228, 168, 174, -184, 246, -142, -190,
  123, 184, -157, -265, 126, 189, 192, 261, -163, 246, 147, 183, -220, 204, -193, 177, -226, -181, 204, 165,
  -229, 177, 201, -187, -229, 168, -184, 171, -247, -187, -208, -157, 216, 168, -214, 198, -217, 174, 246, -200, -244
]; // negative = rising bar

const vol = makePanel('vol', 27);
vol.grid([181], '#a00000');
vol.labels([[184, '200万']]);
volume.forEach((v, i) => vol.box(i, Math.abs(v), v < 0 ? 297 : 300, v < 0));
vol.line([211, 181, 193, 187, 199, 193, 220, 220, 220, 205, 197, 210, 206, 210, 206, 206, 190, 198, 184, 187, 178, 178, 160, 184, 173, 184, 188, 208, 187, 211, 203, 202, 194, 202, 190, 196, 205, 196, 197, 191, 202, 193, 196, 193, 205, 195, 191, 187, 199, 193, 199, 193, 202, 188, 192, 190, 202, 197, 211, 208, 217], '#fff');
vol.line([205, 199, 199, 199, 199, 202, 203, 208, 205, 203, 198, 213, 213, 214, 203, 202, 199, 202, 196, 199, 190, 184, 181, 184, 181, 181, 181, 184, 187, 190, 192, 193, 199, 193, 199, 199, 202, 193, 199, 191, 199, 199, 196, 193, 199, 197, 193, 193, 197, 199, 196, 193, 199, 193, 193, 196, 199, 199, 199, 199, 202], '#ff0');

/* ---------- MACD ---------- */
const hist = [
  390, 387, 372, 375, 378, 387, 393, 399, 384, 375, 387, 396, 408, 429, 448, 486, 507, 522, 504, 477, 453, 453,
  448, 442, 442, 459, 468, 474, 459, 456, 477, 489, 492, 489, 486, 489, 483, 474, 486, 495, 495, 498, 507, 504,
  492, 495, 483, 480, 471, 462, 448, 435, 429, 432, 426, 423, 411, 405, 405, 402, 399
];

const macd = makePanel('macd', 120);
macd.grid([445], '#e01400');
macd.labels([[445, '0']]);
hist.forEach((v, i) => {
  if (v < 445) macd.stick(i, v, 447, RED);
  else macd.stick(i, 444, v, CYAN);
});
macd.line([448, 439, 421, 412, 406, 403, 398, 394, 379, 367, 364, 362, 364, 370, 382, 406, 424, 441, 442, 430, 421, 421, 421, 419, 419, 427, 433, 442, 436, 436, 451, 464, 469, 472, 475, 484, 484, 484, 496, 505, 514, 521, 532, 538, 538, 547, 547, 547, 547, 547, 538, 529, 526, 523, 517, 514, 502, 493, 490, 481, 475], '#fff');
macd.line([475, 469, 457, 448, 442, 433, 427, 421, 412, 403, 394, 388, 385, 382, 382, 388, 394, 403, 412, 415, 419, 419, 419, 419, 419, 421, 421, 427, 427, 430, 433, 440, 445, 451, 457, 460, 466, 469, 475, 481, 487, 493, 502, 508, 514, 523, 526, 532, 535, 538, 538, 535, 532, 532, 529, 526, 520, 517, 511, 505, 499], '#ff0');

/* ---------- MOM ---------- */
const mom = makePanel('mom', 202);
mom.grid([697], '#e01400');
mom.labels([[697, '0']]);
mom.line([625, 619, 610, 646, 655, 661, 649, 664, 622, 631, 649, 633, 616, 671, 715, 745, 745, 751, 709, 682, 718, 751, 715, 718, 716, 727, 712, 673, 637, 649, 734, 766, 760, 736, 748, 766, 751, 715, 754, 757, 790, 784, 767, 754, 751, 781, 763, 757, 769, 769, 718, 703, 718, 715, 682, 697, 685, 658, 688, 664, 664], '#fff');
mom.line([619, 619, 616, 625, 631, 634, 640, 646, 649, 646, 646, 640, 637, 637, 652, 673, 688, 706, 724, 724, 724, 727, 721, 716, 715, 724, 724, 709, 697, 685, 688, 694, 703, 712, 733, 751, 754, 745, 745, 748, 757, 760, 764, 769, 769, 772, 766, 763, 763, 766, 760, 745, 739, 733, 718, 706, 700, 694, 688, 679, 676], '#ff0');

/* ---------- ADTM ---------- */
const adtm = makePanel('adtm', 283);
adtm.grid([973], '#e01400');
adtm.labels([[973, '0']]);
adtm.line([943, 937, 931, 922, 904, 898, 883, 868, 856, 850, 853, 856, 853, 868, 889, 937, 952, 952, 949, 934, 928, 958, 952, 931, 922, 967, 1006, 1012, 1015, 982, 1009, 1012, 1042, 1033, 1039, 1042, 1036, 1015, 979, 982, 997, 988, 1036, 1060, 1039, 1027, 1036, 1027, 1009, 979, 976, 961, 994, 976, 967, 952, 973, 931, 946, 949, 958], '#fff');
adtm.line([946, 943, 940, 931, 925, 919, 916, 910, 898, 889, 880, 871, 865, 862, 862, 871, 883, 895, 907, 916, 925, 937, 946, 946, 940, 943, 949, 961, 970, 973, 979, 991, 1006, 1015, 1018, 1021, 1024, 1030, 1024, 1021, 1015, 1009, 1009, 1012, 1012, 1015, 1021, 1027, 1027, 1027, 1018, 1006, 1000, 994, 985, 976, 973, 967, 961, 961, 958], '#ff0');

/* ---------- CCI ---------- */
const cci = makePanel('cci', 373);
cci.grid([1189, 1267, 1345], '#e01400');
cci.labels([[1189, '100'], [1267, '0'], [1345, '-100']]);
cci.line([1250, 1210, 1150, 1159, 1183, 1198, 1198, 1201, 1144, 1120, 1168, 1189, 1222, 1246, 1320, 1402, 1417, 1390, 1320, 1252, 1222, 1258, 1252, 1246, 1252, 1285, 1306, 1303, 1225, 1249, 1342, 1372, 1351, 1339, 1333, 1351, 1333, 1294, 1372, 1414, 1393, 1375, 1393, 1372, 1333, 1351, 1336, 1330, 1333, 1306, 1297, 1228, 1258, 1300, 1240, 1228, 1159, 1126, 1195, 1192, 1171], '#fff');

/* ---------- dates ---------- */
const dates = document.getElementById('dates');
[[1, '0909'], [5, '11'], [9, '16'], [12, '18'], [16, '20'], [20, '24'], [24, '26'], [28, '30'],
 [31, '1009'], [35, '11'], [39, '15'], [43, '17'], [47, '21'], [51, '23'], [55, '25'], [59, '29']
].forEach(([i, text]) => el(dates, 'text', { x: barX(i), y: 11, 'text-anchor': 'middle' }, text));

/* ---------- ticks ---------- */
const ticks = [
  ['14:49', 3346, 1082, '-806', '多平', 'green'], ['14:50', 3346, 1086, '-1060', '多平', 'green'],
  [':05', 3348, 1248, '+264', '多开', 'red'], [':19', 3348, 1022, '-464', '多平', 'green'],
  [':26', 3350, 1008, '-670', '多平', 'green'], [':26', 3350, 1076, '-418', '空平', 'red'],
  [':28', 3350, 1460, '-1046', '空平', 'red'], [':38', 3350, 1088, '-566', '空平', 'red'],
  ['14:52', 3349, 1000, '-660', '多平', 'green'], [':39', 3349, 1818, '-920', '多平', 'green'],
  ['14:53', 3351, 1014, '+62', '空开', 'green'], [':42', 3350, 1012, '+688', '空开', 'green'],
  ['14:54', 3349, 1690, '-690', '多平', 'green'], ['14:57', 3346, 1022, '+552', '空开', 'green'],
  [':19', 3346, 1180, '-918', '空平', 'red'], [':31', 3346, 1168, '-768', '空平', 'red'],
  ['14:58', 3347, 1076, '-568', '空平', 'red'], ['14:59', 3349, 1004, '+244', '多开', 'red'],
  [':28', 3348, 1152, '-820', '多平', 'green']
];

document.getElementById('ticks').innerHTML = ticks.map(([time, p, size, diff, kind, color]) => `
  <tr>
    <td class="${time[0] === ':' ? 'second' : ''}">${time}</td>
    <td class="red">${p}</td>
    <td class="${color}">${size}</td>
    <td class="yellow">${diff}</td>
    <td class="${color}">${kind}</td>
  </tr>`).join('');
```
